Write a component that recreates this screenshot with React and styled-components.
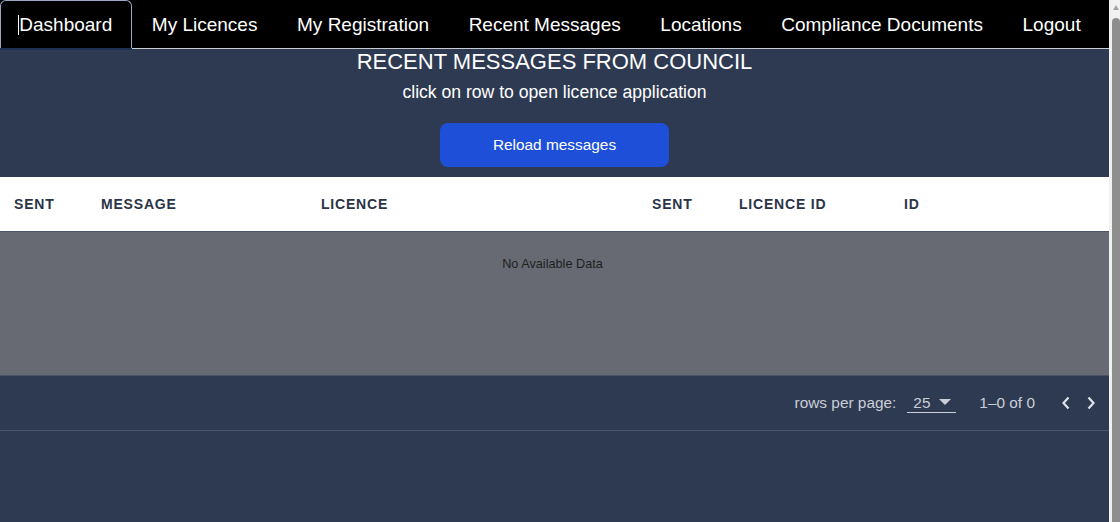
import React from "react";
import styled, { createGlobalStyle } from "styled-components";

const Global = createGlobalStyle`
  html, body { margin: 0; padding: 0; }
  body {
    background: #2e3a52;
    font-family: "Liberation Sans", Arial, sans-serif;
    overflow: hidden;
  }
  * { box-sizing: border-box; }
`;

const Frame = styled.div`
  display: flex;
  height: 100vh;
`;

const Page = styled.div`
  flex: 1;
  min-width: 0;
  display: flex;
  flex-direction: column;
  background: #2e3a52;
`;

const ScrollTrack = styled.div`
  width: 11px;
  flex-shrink: 0;
  background: #f1f1f1;
  display: flex;
  flex-direction: column;
  align-items: flex-end;
  padding-top: 5px;
`;

const ScrollArrow = styled.div`
  width: 0;
  height: 0;
  margin-right: 1px;
  border-left: 3.5px solid transparent;
  border-right: 3.5px solid transparent;
  border-bottom: 5px solid #a3a3a3;
`;

const ScrollThumb = styled.div`
  margin-top: 8px;
  width: 8px;
  flex: 1;
  background: #8e8e8e;
  border-radius: 4px 4px 0 0;
`;

const Nav = styled.nav`
  display: flex;
  align-items: stretch;
  height: 49px;
  background: #000;
  border-bottom: 1px solid #c9ccd3;
`;

const NavItem = styled.a`
  position: relative;
  display: flex;
  align-items: center;
  padding: 0 18.3px;
  margin-right: 1px;
  font-size: 19px;
  color: #fff;
  text-decoration: none;
  border: 1px solid ${(p) => (p.$active ? "#9aa6c4" : "transparent")};
  border-bottom: none;
  border-radius: 6px 6px 0 0;
  box-shadow: ${(p) => (p.$active ? "0 2px 0 #1e3152" : "none")};
  &::before {
    content: "";
    display: ${(p) => (p.$active ? "block" : "none")};
    position: absolute;
    left: 17px;
    top: 14px;
    width: 1px;
    height: 20px;
    background: #fff;
  }
`;

const Header = styled.header`
  display: flex;
  flex-direction: column;
  align-items: center;
  padding-bottom: 10px;
  color: #fff;
`;

const Title = styled.h1`
  margin: 0;
  font-size: 22px;
  font-weight: 400;
  line-height: 25px;
`;

const Subtitle = styled.p`
  margin: 7px 0 0;
  font-size: 17.6px;
  line-height: 22px;
`;

const ReloadButton = styled.button`
  margin-top: 20px;
  width: 229px;
  height: 44px;
  border: none;
  border-radius: 8px;
  background: #1e4fd8;
  color: #fff;
  font-family: "Liberation Sans", Arial, sans-serif;
  font-size: 15.4px;
  cursor: pointer;
`;

const Table = styled.div`
  display: flex;
  flex-direction: column;
`;

const cols = "87px 220px 331px 87px 165px 1fr";

const HeadRow = styled.div`
  display: grid;
  grid-template-columns: ${cols};
  align-items: center;
  height: 55px;
  background: #fff;
  border-bottom: 1px solid #4b5568;
`;

const HeadCell = styled.div`
  padding-left: 14px;
  font-size: 14px;
  font-weight: 700;
  letter-spacing: 0.8px;
  color: #2b3446;
`;

const Body = styled.div`
  height: 144px;
  background: #676a73;
  border-bottom: 1px solid #4a5266;
  display: flex;
  justify-content: center;
  padding-top: 25px;
`;

const Empty = styled.span`
  font-size: 12.7px;
  color: #1e1f22;
  margin-right: 4px;
`;

const Footer = styled.div`
  height: 55px;
  display: flex;
  align-items: center;
  justify-content: flex-end;
  padding-right: 6px;
  border-bottom: 1px solid #4a5470;
  color: #c9ced8;
  font-size: 15.4px;
`;

const Label = styled.span`
  margin-right: 11px;
`;

const Select = styled.div`
  display: flex;
  align-items: center;
  width: 49px;
  height: 20px;
  padding-left: 6px;
  border-bottom: 1px solid #c9ced8;
  gap: 9px;
`;

const Range = styled.span`
  margin-left: 23px;
  margin-right: 18px;
`;

const Arrow = styled.span`
  display: flex;
  width: 25px;
  justify-content: center;
`;

export default function App() {
  const items = [
    "Dashboard",
    "My Licences",
    "My Registration",
    "Recent Messages",
    "Locations",
    "Compliance Documents",
    "Logout",
  ];
  return (
    <>
      <Global />
      <Frame>
        <Page>
          <Nav>
            {items.map((t, i) => (
              <NavItem key={t} href="#" $active={i === 0}>
                {t}
              </NavItem>
            ))}
          </Nav>
          <Header>
            <Title>RECENT MESSAGES FROM COUNCIL</Title>
            <Subtitle>click on row to open licence application</Subtitle>
            <ReloadButton>Reload messages</ReloadButton>
          </Header>
          <Table>
            <HeadRow>
              {["SENT", "MESSAGE", "LICENCE", "SENT", "LICENCE ID", "ID"].map((h, i) => (
                <HeadCell key={i}>{h}</HeadCell>
              ))}
            </HeadRow>
            <Body>
              <Empty>No Available Data</Empty>
            </Body>
            <Footer>
              <Label>rows per page:</Label>
              <Select>
                <span>25</span>
                <svg width="12" height="7" viewBox="0 0 12 7">
                  <path d="M0 0 L12 0 L6 6 Z" fill="#c9ced8" />
                </svg>
              </Select>
              <Range>1–0 of 0</Range>
              <Arrow>
                <svg width="10" height="14" viewBox="0 0 10 14">
                  <path d="M7.5 1.5 L2.5 7 L7.5 12.5" stroke="#dfe2e8" strokeWidth="2.2" fill="none" />
                </svg>
              </Arrow>
              <Arrow>
                <svg width="10" height="14" viewBox="0 0 10 14">
                  <path d="M2.5 1.5 L7.5 7 L2.5 12.5" stroke="#dfe2e8" strokeWidth="2.2" fill="none" />
                </svg>
              </Arrow>
            </Footer>
          </Table>
        </Page>
        <ScrollTrack>
          <ScrollArrow />
          <ScrollThumb />
        </ScrollTrack>
      </Frame>
    </>
  );
}
